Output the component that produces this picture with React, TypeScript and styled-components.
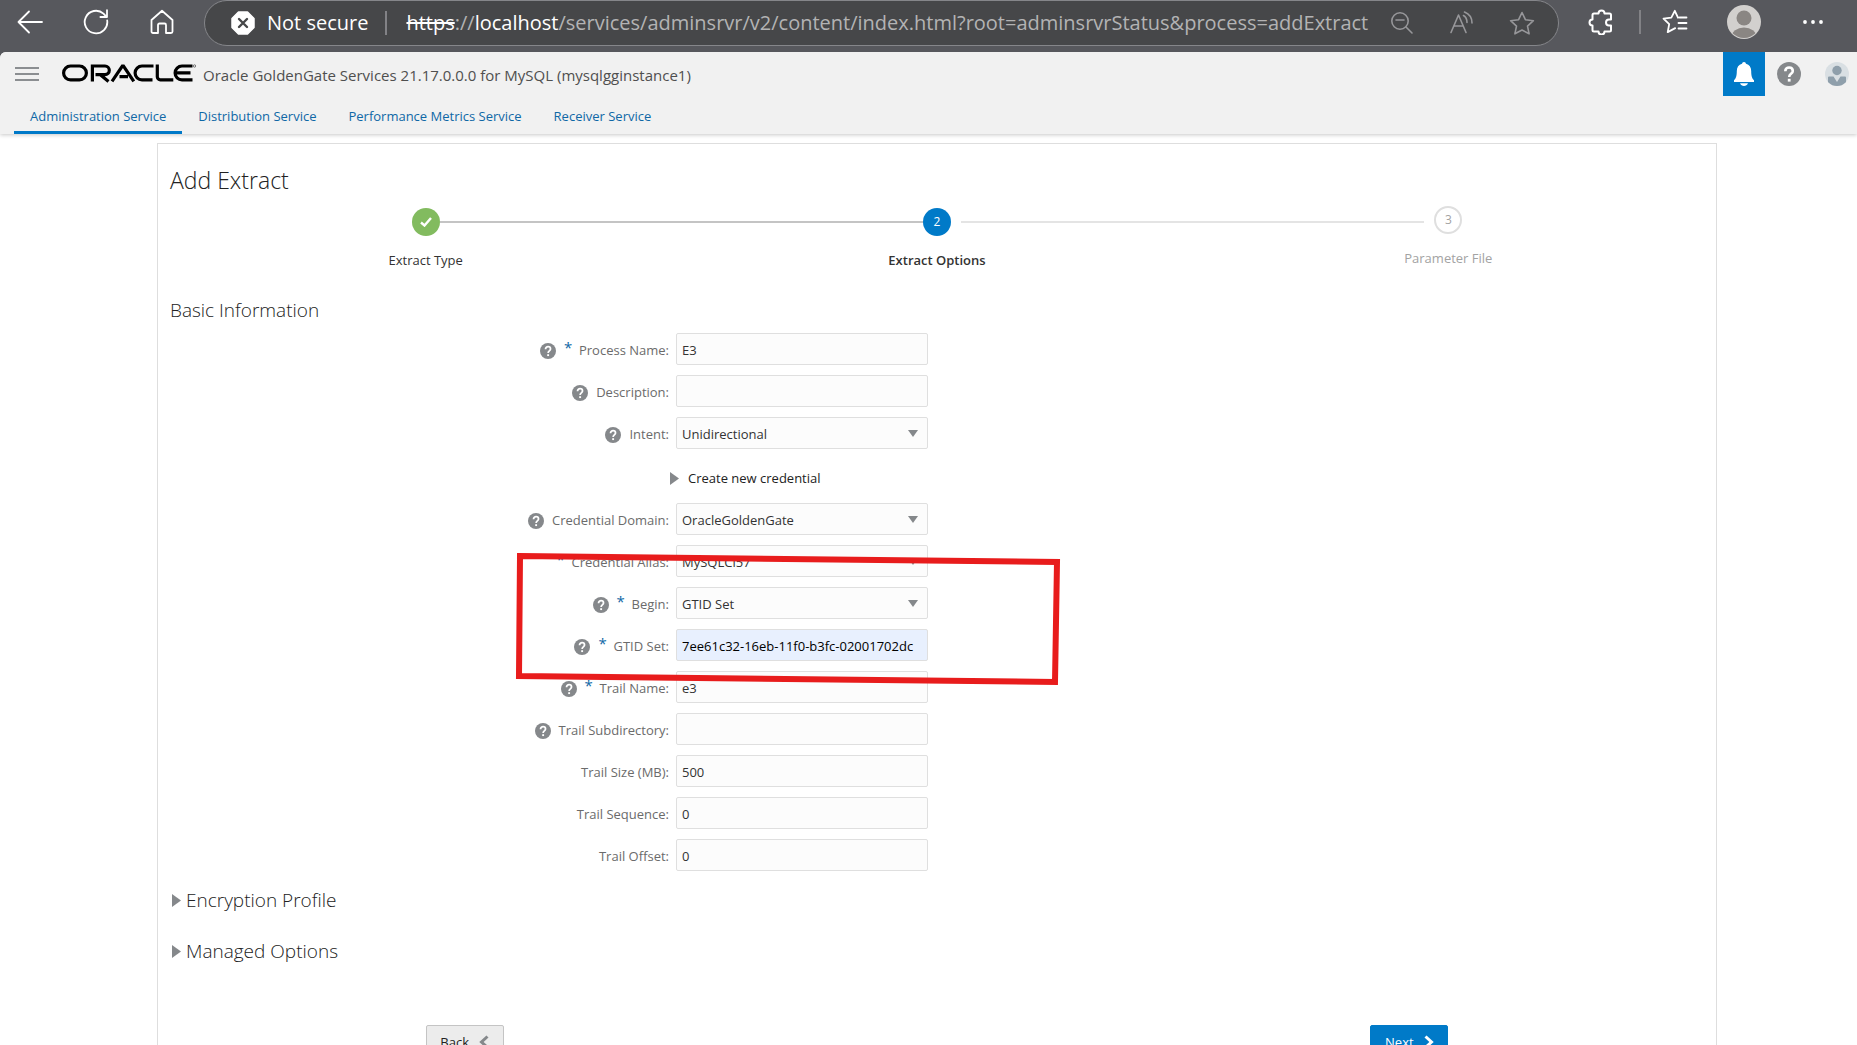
import React from 'react';
import styled, { createGlobalStyle, css } from 'styled-components';

const FONT = '"Open Sans", "Noto Sans", sans-serif';

const GlobalStyle = createGlobalStyle`
  *, *::before, *::after { box-sizing: border-box; }
  body { margin: 0; background: #fff; font-family: ${FONT}; color: #333; }
  button, input, select { font-family: inherit; }
  h1, h2 { margin: 0; font-weight: 300; }
`;

const Shell = styled.div`
  display: flex;
  flex-direction: column;
  height: 100vh;
  background: #57585d;
`;

/* Browser chrome */

const BrowserBar = styled.div`
  display: flex;
  align-items: flex-start;
  height: 52px;
  flex: none;
  padding-right: 10px;
  background: #57585d;
`;

const BarButton = styled.button<{ $width?: number; $dim?: boolean }>`
  display: flex;
  align-items: center;
  justify-content: center;
  width: ${(p) => p.$width ?? 60}px;
  height: 44px;
  flex: none;
  padding: 0;
  border: 0;
  background: none;
  color: ${(p) => (p.$dim ? '#97979a' : '#fff')};
`;

const NavButtons = styled.div`
  display: flex;
  width: 204px;
  flex: none;
`;

const AddressBar = styled.div`
  display: flex;
  align-items: center;
  flex: 1;
  min-width: 0;
  height: 46px;
  padding: 0 6px 0 26px;
  border: 1px solid #85868a;
  border-radius: 23px;
  background: #464749;
`;

const Security = styled.span`
  display: flex;
  align-items: center;
  gap: 12px;
  padding-right: 17px;
  color: #fff;
  font-size: 20px;
  line-height: 28px;
  white-space: nowrap;
`;

const Divider = styled.span`
  width: 2px;
  height: 24px;
  flex: none;
  background: #828286;
`;

const Url = styled.span`
  flex: 1;
  min-width: 0;
  overflow: hidden;
  padding-left: 19px;
  color: #b3b3b4;
  font-size: 20px;
  line-height: 28px;
  white-space: nowrap;
  b { color: #fff; font-weight: 400; }
  s { color: #fff; }
`;

/* Application header */

const Page = styled.div`
  display: flex;
  flex-direction: column;
  flex: 1;
  min-height: 0;
  overflow: hidden;
  border-top-left-radius: 6px;
  background: #fff;
`;

const Header = styled.header`
  flex: none;
  height: 82px;
  background: #f1f1f1;
  box-shadow: 0 1px 4px rgba(0, 0, 0, 0.22);
`;

const Branding = styled.div`
  display: flex;
  align-items: center;
  height: 44px;
  padding-left: 15px;
`;

const MenuButton = styled.button`
  display: flex;
  width: 24px;
  margin-right: 23px;
  padding: 0;
  border: 0;
  background: none;
`;

const ProductName = styled.span`
  flex: 1;
  padding: 2px 0 0 7px;
  color: #4f4f4f;
  font-size: 15px;
  line-height: 24px;
`;

const HeaderButton = styled.button<{ $active?: boolean }>`
  display: flex;
  align-items: center;
  justify-content: center;
  width: ${(p) => (p.$active ? 42 : 48)}px;
  height: 44px;
  padding: 0;
  border: 0;
  background: ${(p) => (p.$active ? '#007ac8' : 'none')};
`;

const HeaderActions = styled.div`
  display: flex;
  margin-right: -4px;
`;

const Tabs = styled.nav`
  display: flex;
  height: 38px;
  padding-left: 14px;
`;

const Tab = styled.a<{ $selected?: boolean }>`
  padding: 10px 16px 0;
  border-bottom: 3px solid ${(p) => (p.$selected ? '#0079c8' : 'transparent')};
  color: #0f68a6;
  font-size: 13px;
  line-height: 20px;
  text-decoration: none;
`;

/* Wizard */

const Content = styled.main`
  flex: 1;
  min-height: 0;
  overflow: hidden auto;
  scrollbar-width: none;
  padding: 9px 140px 0 157px;
`;

const Panel = styled.section`
  padding: 18px 12px 24px;
  border: 1px solid #dedede;
`;

const Title = styled.h1`
  color: #222;
  font-size: 23px;
  line-height: 36px;
`;

const Steps = styled.ol`
  display: grid;
  grid-template-columns: repeat(3, 1fr);
  margin: 0;
  padding: 10px 0 0;
  list-style: none;
`;

type StepState = 'done' | 'current' | 'todo';

const Step = styled.li<{ $state: StepState }>`
  display: grid;
  grid-template-columns: 1fr 28px 1fr;
  grid-template-rows: 28px 40px;
  align-items: center;
  color: ${(p) => (p.$state === 'todo' ? '#a3a3a3' : '#333')};
  font-size: 13px;
  line-height: 20px;
`;

const Line = styled.span<{ $tone: 'solid' | 'faint' | 'none'; $before?: boolean; $after?: boolean }>`
  height: 2px;
  margin: 0 ${(p) => (p.$before ? 10 : 0)}px 0 ${(p) => (p.$after ? 10 : 0)}px;
  background: ${(p) => ({ solid: '#c4c4c4', faint: '#e4e4e4', none: 'transparent' })[p.$tone]};
`;

const Dot = styled.span<{ $state: StepState }>`
  display: flex;
  align-items: center;
  justify-content: center;
  height: 28px;
  border-radius: 50%;
  font-size: 12px;
  color: #fff;
  background: ${(p) => (p.$state === 'done' ? '#82bb5f' : '#007ac8')};
  ${(p) =>
    p.$state === 'todo' &&
    css`
      border: 2px solid #dfdfdf;
      background: #fff;
      color: #a3a3a3;
      margin-top: -4px;
    `}
`;

const StepLabel = styled.span<{ $state: StepState }>`
  grid-column: 1 / -1;
  padding-top: ${(p) => (p.$state === 'todo' ? 4 : 8)}px;
  text-align: center;
  font-weight: ${(p) => (p.$state === 'current' ? 600 : 400)};
`;

const SectionTitle = styled.h2`
  color: #222;
  font-size: 19px;
  line-height: 26px;
`;

const Form = styled.form`
  position: relative;
  display: flex;
  flex-direction: column;
  gap: 10px;
  padding: 21px 0 15px;
`;

const Row = styled.div`
  display: grid;
  grid-template-columns: 499px 252px;
  column-gap: 7px;
  height: 32px;
`;

const LabelCell = styled.div`
  display: flex;
  align-items: center;
  justify-content: flex-end;
  gap: 8px;
  padding-top: 2px;
  color: #6b6b6b;
  font-size: 13px;
  line-height: 20px;
`;

const HelpButton = styled.button`
  display: flex;
  padding: 2px 0 0;
  border: 0;
  background: none;
`;

const Star = styled.span`
  width: 7px;
  height: 30px;
  color: #0f68a6;
  font-size: 15px;
  line-height: 24px;
`;

const fieldBox = css`
  width: 100%;
  height: 32px;
  padding: 2px 5px 0;
  border: 1px solid #dfdfdf;
  border-radius: 2px;
  background: #fcfcfc;
  color: #333;
  font-size: 13px;
`;

const TextField = styled.input<{ $filled?: boolean }>`
  ${fieldBox}
  ${(p) =>
    p.$filled &&
    css`
      background: #e8f0fe;
      color: #000;
    `}
`;

const SelectWrap = styled.div`
  display: grid;
  align-items: center;
  svg {
    grid-area: 1 / 1;
    justify-self: end;
    margin-right: 10px;
    pointer-events: none;
  }
`;

const SelectField = styled.select`
  ${fieldBox}
  grid-area: 1 / 1;
  appearance: none;
`;

const CredentialToggle = styled.button`
  display: flex;
  align-items: center;
  gap: 9px;
  height: 34px;
  padding: 4px 0 0 500px;
  border: 0;
  background: none;
  color: #222;
  font-size: 13px;
  line-height: 20px;
`;

const Highlight = styled.svg`
  position: absolute;
  top: 273px;
  left: 343px;
  pointer-events: none;
`;

const SectionToggle = styled.button`
  display: flex;
  align-items: center;
  gap: 5px;
  padding: 0 0 0 2px;
  border: 0;
  background: none;
  color: #222;
  font-size: 19px;
  font-weight: 300;
  line-height: 28px;
`;

const Sections = styled.div`
  display: flex;
  flex-direction: column;
  gap: 23px;
`;

const Actions = styled.div`
  display: flex;
  justify-content: space-between;
  padding: 60px calc(100% / 6) 0;
`;

const ActionButton = styled.button<{ $primary?: boolean }>`
  display: flex;
  align-items: center;
  justify-content: center;
  gap: 10px;
  width: 78px;
  height: 34px;
  border: 1px solid ${(p) => (p.$primary ? '#007ac8' : '#c4c4c4')};
  border-radius: 2px;
  background: ${(p) => (p.$primary ? '#007ac8' : '#ececec')};
  color: ${(p) => (p.$primary ? '#fff' : '#222')};
  font-size: 13px;
`;

/* Icons */

const stroke = {
  fill: 'none',
  stroke: 'currentColor',
  strokeWidth: 1.6,
  strokeLinecap: 'round' as const,
  strokeLinejoin: 'round' as const,
};

const HelpGlyph = ({ size }: { size: number }) => (
  <svg width={size} height={size} viewBox="0 0 24 24" aria-hidden="true">
    <circle cx="12" cy="12" r="12" fill="#85888b" />
    <path d="M8.3 9.2c0-2.3 1.6-3.7 3.8-3.7s3.7 1.3 3.7 3.4c0 2.9-3.6 3-3.6 6" fill="none" stroke="#fff" strokeWidth="2.6" />
    <rect x="10.8" y="16.8" width="2.8" height="2.8" fill="#fff" />
  </svg>
);

const RightTriangle = () => (
  <svg width="9" height="13" viewBox="0 0 9 13" aria-hidden="true">
    <path d="M0 0l9 6.5L0 13z" fill="#85888b" />
  </svg>
);

const OracleLogo = () => (
  <svg width="134" height="20" viewBox="0 0 134 20" role="img" aria-label="Oracle">
    <g fill="none" stroke="#000" strokeWidth="3.2">
      <path d="M8.5 2h9a6.9 6.9 0 0 1 0 13.8h-9a6.9 6.9 0 0 1 0-13.8z" />
      <path d="M30.4 17.4V2h12.6a4.3 4.3 0 0 1 0 8.6H33.5M38 10.6l8.500 6.800" />
      <path d="M50 17.4l10.3-15.200h1.200l10.300 15.200M57.500 12.600h8.500" />
      <path d="M91.5 2H80a6.9 6.9 0 0 0 0 13.8h10.5" />
      <path d="M95.3.4v12.4a3 3 0 0 0 3 3h13" />
      <path d="M130.5 2H120a6.9 6.9 0 0 0 0 13.8h10.5M114 8.9h14.5" />
    </g>
    <circle cx="132.500" cy="2" r="1.200" fill="none" stroke="#555" strokeWidth=".8" />
  </svg>
);

const BackArrow = () => (
  <svg width="26" height="24" viewBox="0 0 26 24" {...stroke} strokeWidth={1.8}>
    <path d="M12 1.5L1.5 12 12 22.5M1.5 12H25" />
  </svg>
);

const Reload = () => (
  <svg width="26" height="26" viewBox="0 0 26 26" {...stroke} strokeWidth={1.8}>
    <path d="M24.2 11.5A11.3 11.3 0 1 1 20.500 4.600L23.500 7.800M24 1.200v6.800h-6.600" />
  </svg>
);

const Home = () => (
  <svg width="24" height="26" viewBox="0 0 24 26" {...stroke} strokeWidth={1.8}>
    <path d="M1.500 11L12 1.800 22.500 11v11.500a1.500 1.500 0 0 1-1.500 1.500h-5v-8a1.500 1.500 0 0 0-1.500-1.500h-5A1.500 1.500 0 0 0 8 16v8H3a1.500 1.500 0 0 1-1.500-1.500z" />
  </svg>
);

const InsecureBadge = () => (
  <svg width="24" height="24" viewBox="0 0 24 24" aria-hidden="true">
    <path d="M7.500 1h9L23 7.500v9L16.500 23h-9L1 16.500v-9z" fill="#fff" stroke="#fff" strokeWidth="1.500" strokeLinejoin="round" />
    <path d="M8 8l8 8M16 8l-8 8" stroke="#464749" strokeWidth="2.400" strokeLinecap="round" />
  </svg>
);

const ZoomOut = () => (
  <svg width="24" height="24" viewBox="0 0 24 24" {...stroke}>
    <circle cx="10" cy="10" r="8.200" />
    <path d="M6 9h8M16 16l6 6" />
  </svg>
);

const ReadAloud = () => (
  <svg width="26" height="24" viewBox="0 0 26 24" {...stroke}>
    <path d="M2 21.500L9.500 4 17 21.500M5 15h9M14.500 4.500c2.500 1.500 3.500 4 3.500 7M15.500 1c5 2 7.500 6 7.500 11" />
  </svg>
);

const Star5 = () => (
  <svg width="26" height="24" viewBox="0 0 26 24" {...stroke}>
    <path d="M13 1.500l3.400 7.200 8 1-5.900 5.400 1.600 7.700L13 19l-7.100 3.800 1.600-7.700L1.600 9.700l8-1z" />
  </svg>
);

const Puzzle = () => (
  <svg width="30" height="26" viewBox="-4 0 30 26" {...stroke} strokeWidth={2}>
    <path d="M6 4.500h4.500a3 3 0 0 1 6 0H21.500A1.500 1.500 0 0 1 23 6v4.500h-2a2.700 2.700 0 0 0 0 6h2V21a1.500 1.500 0 0 1-1.500 1.500h-5a3 3 0 0 1-6 0H6A1.500 1.500 0 0 1 4.500 21v-4.500a3 3 0 0 1 0-6V6A1.500 1.500 0 0 1 6 4.500z" />
  </svg>
);

const Favorites = () => (
  <svg width="26" height="26" viewBox="0 0 26 26" {...stroke} strokeWidth={1.8}>
    <path d="M17.500 8.500h7M16.500 14h8M16.500 19.500h8M16 8.700L12.800 1.800 9.300 8.700l-7.800 1 5.700 5.500-1.500 7.900 7.500-4" />
  </svg>
);

const ProfilePicture = () => (
  <svg width="34" height="34" viewBox="0 0 34 34">
    <defs>
      <clipPath id="profile-clip">
        <circle cx="17" cy="17" r="16" />
      </clipPath>
    </defs>
    <circle cx="17" cy="17" r="17" fill="#d2d0ce" />
    <g fill="#8a8683" clipPath="url(#profile-clip)">
      <circle cx="17" cy="13" r="7.500" />
      <ellipse cx="17" cy="32" rx="12.500" ry="9.500" />
    </g>
  </svg>
);

const More = () => (
  <svg width="20" height="4" viewBox="0 0 20 4" fill="currentColor">
    <circle cx="2" cy="2" r="1.900" />
    <circle cx="10" cy="2" r="1.900" />
    <circle cx="18" cy="2" r="1.900" />
  </svg>
);

const Bell = () => (
  <svg width="22" height="24" viewBox="0 0 22 24" fill="#fff">
    <path d="M11 0a2 2 0 0 1 2 1.800c3.400.9 5.200 3.600 5.200 7.200 0 5 .8 7.300 2.800 9.300v1.700H1v-1.700c2-2 2.800-4.300 2.800-9.300 0-3.600 1.800-6.300 5.200-7.200A2 2 0 0 1 11 0zM7 21.200h8c-.8 1.800-2.200 2.800-4 2.800s-3.200-1-4-2.800z" />
  </svg>
);

const UserBadge = () => (
  <svg width="24" height="24" viewBox="0 0 24 24">
    <defs>
      <clipPath id="user-clip">
        <circle cx="12" cy="12" r="12" />
      </clipPath>
    </defs>
    <circle cx="12" cy="12" r="12" fill="#d9dfe3" />
    <g fill="#8f9fab" clipPath="url(#user-clip)">
      <circle cx="12" cy="8.500" r="4.700" />
      <path d="M3 15.500q0-1 1-1h4.500L12 20l3.500-5.500H20q1 0 1 1V24H3z" />
    </g>
  </svg>
);

/* Form data */

type Field = {
  id: string;
  label: string;
  value: string;
  help?: boolean;
  required?: boolean;
  select?: boolean;
  filled?: boolean;
};

const processFields: Field[] = [
  { id: 'processName', label: 'Process Name:', value: 'E3', help: true, required: true },
  { id: 'description', label: 'Description:', value: '', help: true },
  { id: 'intent', label: 'Intent:', value: 'Unidirectional', help: true, select: true },
];

const trailFields: Field[] = [
  { id: 'domain', label: 'Credential Domain:', value: 'OracleGoldenGate', help: true, select: true },
  { id: 'alias', label: 'Credential Alias:', value: 'MySQLCl57', required: true, select: true },
  { id: 'begin', label: 'Begin:', value: 'GTID Set', help: true, required: true, select: true },
  { id: 'gtid', label: 'GTID Set:', value: '7ee61c32-16eb-11f0-b3fc-02001702dc', help: true, required: true, filled: true },
  { id: 'trailName', label: 'Trail Name:', value: 'e3', help: true, required: true },
  { id: 'trailDir', label: 'Trail Subdirectory:', value: '', help: true },
  { id: 'trailSize', label: 'Trail Size (MB):', value: '500' },
  { id: 'trailSeq', label: 'Trail Sequence:', value: '0' },
  { id: 'trailOffset', label: 'Trail Offset:', value: '0' },
];

const FieldRow = ({ field }: { field: Field }) => (
  <Row>
    <LabelCell>
      {field.help && (
        <HelpButton type="button" aria-label={`Help for ${field.label}`}>
          <HelpGlyph size={16} />
        </HelpButton>
      )}
      {field.required && <Star>*</Star>}
      <label htmlFor={field.id}>{field.label}</label>
    </LabelCell>
    {field.select ? (
      <SelectWrap>
        <SelectField id={field.id} defaultValue={field.value}>
          <option>{field.value}</option>
        </SelectField>
        <svg width="10" height="7" viewBox="0 0 10 7" aria-hidden="true">
          <path d="M0 0h10L5 7z" fill="#85888b" />
        </svg>
      </SelectWrap>
    ) : (
      <TextField id={field.id} defaultValue={field.value} $filled={field.filled} />
    )}
  </Row>
);

export default function App() {
  return (
    <Shell>
      <GlobalStyle />
      <BrowserBar>
        <NavButtons>
          <BarButton aria-label="Back"><BackArrow /></BarButton>
          <BarButton aria-label="Reload" $width={72}><Reload /></BarButton>
          <BarButton aria-label="Home"><Home /></BarButton>
        </NavButtons>
        <AddressBar>
          <Security><InsecureBadge />Not secure</Security>
          <Divider />
          <Url>
            <s>https</s>://<b>localhost</b>/services/adminsrvr/v2/content/index.html?root=adminsrvrStatus&amp;process=addExtract
          </Url>
          <BarButton aria-label="Zoom out" $dim><ZoomOut /></BarButton>
          <BarButton aria-label="Read aloud" $dim><ReadAloud /></BarButton>
          <BarButton aria-label="Add to favorites" $dim><Star5 /></BarButton>
        </AddressBar>
        <BarButton aria-label="Extensions" $width={80}><Puzzle /></BarButton>
        <BarButton as="span" $width={2}><Divider /></BarButton>
        <BarButton aria-label="Favorites" $width={68}><Favorites /></BarButton>
        <BarButton aria-label="Profile" $width={70}><ProfilePicture /></BarButton>
        <BarButton aria-label="Settings" $width={68}><More /></BarButton>
      </BrowserBar>

      <Page>
        <Header>
          <Branding>
            <MenuButton aria-label="Navigation menu">
              <svg width="24" height="14" viewBox="0 0 24 14" stroke="#8b8e91" strokeWidth="2">
                <path d="M0 1h24M0 7h24M0 13h24" />
              </svg>
            </MenuButton>
            <OracleLogo />
            <ProductName>Oracle GoldenGate Services 21.17.0.0.0 for MySQL (mysqlgginstance1)</ProductName>
            <HeaderActions>
              <HeaderButton aria-label="Notifications" $active><Bell /></HeaderButton>
              <HeaderButton aria-label="Help"><HelpGlyph size={24} /></HeaderButton>
              <HeaderButton aria-label="User"><UserBadge /></HeaderButton>
            </HeaderActions>
          </Branding>
          <Tabs>
            <Tab href="#administration" $selected>Administration Service</Tab>
            <Tab href="#distribution">Distribution Service</Tab>
            <Tab href="#performance">Performance Metrics Service</Tab>
            <Tab href="#receiver">Receiver Service</Tab>
          </Tabs>
        </Header>

        <Content>
          <Panel>
            <Title>Add Extract</Title>
            <Steps>
              <Step $state="done">
                <Line $tone="none" />
                <Dot $state="done">
                  <svg width="12" height="10" viewBox="0 0 12 10" fill="none" stroke="#fff" strokeWidth="2.400">
                    <path d="M1 5.500l3.500 3L11 1" />
                  </svg>
                </Dot>
                <Line $tone="solid" />
                <StepLabel $state="done">Extract Type</StepLabel>
              </Step>
              <Step $state="current">
                <Line $tone="solid" />
                <Dot $state="current">2</Dot>
                <Line $tone="faint" $after />
                <StepLabel $state="current">Extract Options</StepLabel>
              </Step>
              <Step $state="todo">
                <Line $tone="faint" $before />
                <Dot $state="todo">3</Dot>
                <Line $tone="none" />
                <StepLabel $state="todo">Parameter File</StepLabel>
              </Step>
            </Steps>

            <Form onSubmit={(e) => e.preventDefault()}>
              <SectionTitle>Basic Information</SectionTitle>
              {processFields.map((f) => <FieldRow key={f.id} field={f} />)}
              <CredentialToggle type="button"><RightTriangle />Create new credential</CredentialToggle>
              {trailFields.map((f) => <FieldRow key={f.id} field={f} />)}
              <Highlight width="550" height="140" viewBox="0 0 550 140" fill="none" aria-hidden="true">
                <path d="M7 7L544 13L542 133L6 127Z" stroke="#e81c1c" strokeWidth="6" />
              </Highlight>
            </Form>

            <Sections>
              <SectionToggle type="button"><RightTriangle />Encryption Profile</SectionToggle>
              <SectionToggle type="button"><RightTriangle />Managed Options</SectionToggle>
            </Sections>

            <Actions>
              <ActionButton type="button">
                Back
                <svg width="10" height="14" viewBox="0 0 10 14" fill="none" stroke="#85888b" strokeWidth="3">
                  <path d="M8.500 1.500L2.500 7l6 5.500" />
                </svg>
              </ActionButton>
              <ActionButton type="button" $primary>
                Next
                <svg width="10" height="14" viewBox="0 0 10 14" fill="none" stroke="#fff" strokeWidth="3">
                  <path d="M1.500 1.500l6 5.500-6 5.500" />
                </svg>
              </ActionButton>
            </Actions>
          </Panel>
        </Content>
      </Page>
    </Shell>
  );
}
